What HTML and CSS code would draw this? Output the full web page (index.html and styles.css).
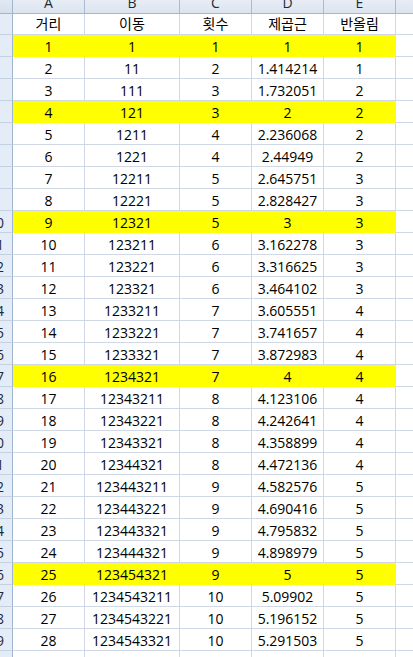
FILE: index.html
```html
<!DOCTYPE html>
<html lang="ko">
<head>
<meta charset="utf-8">
<title>Sheet</title>
<link rel="stylesheet" href="styles.css">
</head>
<body>
<div class="sheet">
  <div class="row"><div class="corner"></div><div class="ch">A</div><div class="ch">B</div><div class="ch">C</div><div class="ch">D</div><div class="ch">E</div><div class="ch"></div></div>
  <div class="row top"><div class="rh">1</div><div class="c">거리</div><div class="c">이동</div><div class="c">횟수</div><div class="c">제곱근</div><div class="c">반올림</div><div class="x"></div></div>
  <div class="row hl"><div class="rh">2</div><div class="c">1</div><div class="c">1</div><div class="c">1</div><div class="c">1</div><div class="c">1</div><div class="x"></div></div>
  <div class="row"><div class="rh">3</div><div class="c">2</div><div class="c">11</div><div class="c">2</div><div class="c">1.414214</div><div class="c">1</div><div class="x"></div></div>
  <div class="row"><div class="rh">4</div><div class="c">3</div><div class="c">111</div><div class="c">3</div><div class="c">1.732051</div><div class="c">2</div><div class="x"></div></div>
  <div class="row hl"><div class="rh">5</div><div class="c">4</div><div class="c">121</div><div class="c">3</div><div class="c">2</div><div class="c">2</div><div class="x"></div></div>
  <div class="row"><div class="rh">6</div><div class="c">5</div><div class="c">1211</div><div class="c">4</div><div class="c">2.236068</div><div class="c">2</div><div class="x"></div></div>
  <div class="row"><div class="rh">7</div><div class="c">6</div><div class="c">1221</div><div class="c">4</div><div class="c">2.44949</div><div class="c">2</div><div class="x"></div></div>
  <div class="row"><div class="rh">8</div><div class="c">7</div><div class="c">12211</div><div class="c">5</div><div class="c">2.645751</div><div class="c">3</div><div class="x"></div></div>
  <div class="row"><div class="rh">9</div><div class="c">8</div><div class="c">12221</div><div class="c">5</div><div class="c">2.828427</div><div class="c">3</div><div class="x"></div></div>
  <div class="row hl"><div class="rh">10</div><div class="c">9</div><div class="c">12321</div><div class="c">5</div><div class="c">3</div><div class="c">3</div><div class="x"></div></div>
  <div class="row"><div class="rh">11</div><div class="c">10</div><div class="c">123211</div><div class="c">6</div><div class="c">3.162278</div><div class="c">3</div><div class="x"></div></div>
  <div class="row"><div class="rh">12</div><div class="c">11</div><div class="c">123221</div><div class="c">6</div><div class="c">3.316625</div><div class="c">3</div><div class="x"></div></div>
  <div class="row"><div class="rh">13</div><div class="c">12</div><div class="c">123321</div><div class="c">6</div><div class="c">3.464102</div><div class="c">3</div><div class="x"></div></div>
  <div class="row"><div class="rh">14</div><div class="c">13</div><div class="c">1233211</div><div class="c">7</div><div class="c">3.605551</div><div class="c">4</div><div class="x"></div></div>
  <div class="row"><div class="rh">15</div><div class="c">14</div><div class="c">1233221</div><div class="c">7</div><div class="c">3.741657</div><div class="c">4</div><div class="x"></div></div>
  <div class="row"><div class="rh">16</div><div class="c">15</div><div class="c">1233321</div><div class="c">7</div><div class="c">3.872983</div><div class="c">4</div><div class="x"></div></div>
  <div class="row hl"><div class="rh">17</div><div class="c">16</div><div class="c">1234321</div><div class="c">7</div><div class="c">4</div><div class="c">4</div><div class="x"></div></div>
  <div class="row"><div class="rh">18</div><div class="c">17</div><div class="c">12343211</div><div class="c">8</div><div class="c">4.123106</div><div class="c">4</div><div class="x"></div></div>
  <div class="row"><div class="rh">19</div><div class="c">18</div><div class="c">12343221</div><div class="c">8</div><div class="c">4.242641</div><div class="c">4</div><div class="x"></div></div>
  <div class="row"><div class="rh">20</div><div class="c">19</div><div class="c">12343321</div><div class="c">8</div><div class="c">4.358899</div><div class="c">4</div><div class="x"></div></div>
  <div class="row"><div class="rh">21</div><div class="c">20</div><div class="c">12344321</div><div class="c">8</div><div class="c">4.472136</div><div class="c">4</div><div class="x"></div></div>
  <div class="row"><div class="rh">22</div><div class="c">21</div><div class="c">123443211</div><div class="c">9</div><div class="c">4.582576</div><div class="c">5</div><div class="x"></div></div>
  <div class="row"><div class="rh">23</div><div class="c">22</div><div class="c">123443221</div><div class="c">9</div><div class="c">4.690416</div><div class="c">5</div><div class="x"></div></div>
  <div class="row"><div class="rh">24</div><div class="c">23</div><div class="c">123443321</div><div class="c">9</div><div class="c">4.795832</div><div class="c">5</div><div class="x"></div></div>
  <div class="row"><div class="rh">25</div><div class="c">24</div><div class="c">123444321</div><div class="c">9</div><div class="c">4.898979</div><div class="c">5</div><div class="x"></div></div>
  <div class="row hl"><div class="rh">26</div><div class="c">25</div><div class="c">123454321</div><div class="c">9</div><div class="c">5</div><div class="c">5</div><div class="x"></div></div>
  <div class="row"><div class="rh">27</div><div class="c">26</div><div class="c">1234543211</div><div class="c">10</div><div class="c">5.09902</div><div class="c">5</div><div class="x"></div></div>
  <div class="row"><div class="rh">28</div><div class="c">27</div><div class="c">1234543221</div><div class="c">10</div><div class="c">5.196152</div><div class="c">5</div><div class="x"></div></div>
  <div class="row"><div class="rh">29</div><div class="c">28</div><div class="c">1234543321</div><div class="c">10</div><div class="c">5.291503</div><div class="c">5</div><div class="x"></div></div>
  <div class="row"><div class="rh">30</div><div class="c"></div><div class="c"></div><div class="c"></div><div class="c"></div><div class="c"></div><div class="x"></div></div>
</div>
</body>
</html>
```

FILE: styles.css
```css
html, body {
  margin: 0;
  padding: 0;
  background: #ffffff;
  overflow: hidden;
}

.sheet {
  display: grid;
  grid-template-columns: 33px 72px 95px 72px 72px 72px 60px;
  grid-template-rows: 21px 21px;
  grid-auto-rows: 22px;
  margin: -7px 0 0 -20px;
  font-family: "Open Sans", "Noto Sans CJK KR", sans-serif;
  font-size: 14px;
  color: #000;
}

.row {
  display: contents;
}

.corner,
.ch,
.rh,
.c,
.x {
  box-sizing: border-box;
  white-space: nowrap;
  overflow: hidden;
  text-align: center;
}

.corner {
  background: linear-gradient(#e9eef6, #d6dfec);
  border-right: 1px solid #9eb6ce;
  border-bottom: 1px solid #9eb6ce;
}

.ch {
  background: linear-gradient(#eef2f8, #dbe4ef);
  border-right: 1px solid #a9bcd2;
  border-bottom: 1px solid #9eb6ce;
  line-height: 20px;
  color: #1e2a3a;
}

.rh {
  background: #e4ecf7;
  border-right: 1px solid #9eb6ce;
  border-bottom: 1px solid #c3d1e2;
  line-height: 19px;
  padding-top: 2px;
  color: #1e2a3a;
}

.c,
.x {
  border-right: 1px solid #d0d7e5;
  border-bottom: 1px solid #d0d7e5;
  line-height: 19px;
  padding-top: 2px;
}

.top .c,
.top .rh {
  padding-top: 0;
}

.hl .c {
  background: #ffff00;
  border-color: #ffff00;
}
```
